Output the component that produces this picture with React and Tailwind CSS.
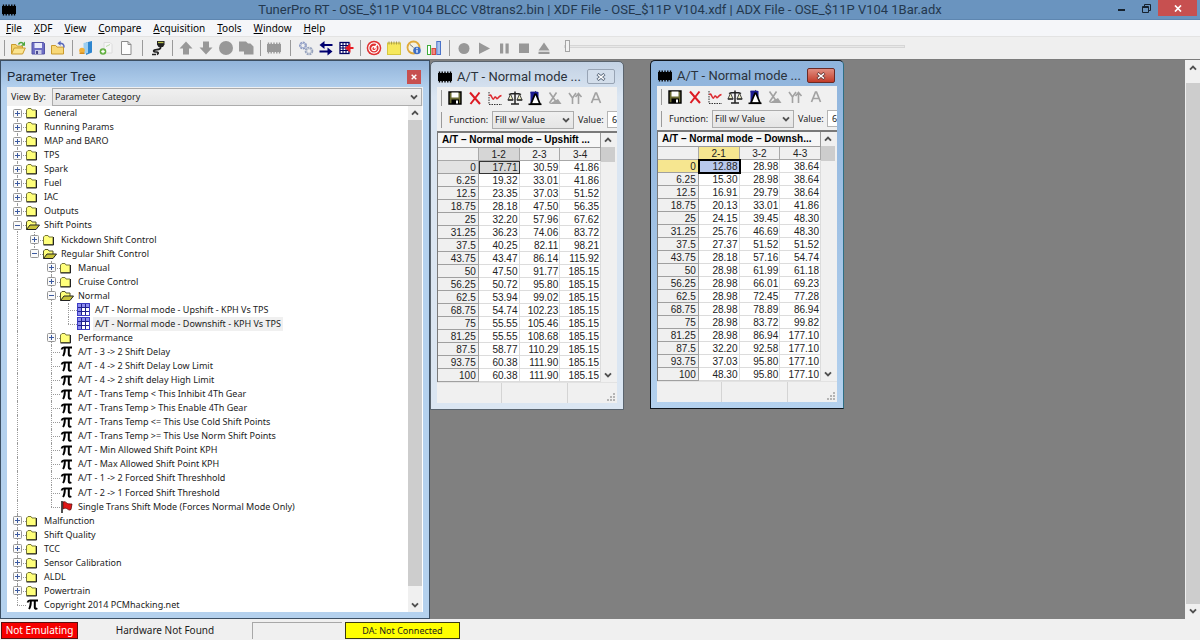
import React, { useState } from "react";

const menus = ["File", "XDF", "View", "Compare", "Acquisition", "Tools", "Window", "Help"];

const pi = (label) => ({ kind: "pi", label });
const folder = (label, children) => ({ kind: children ? "open" : "folder", label, children });

const tree = [
  folder("General"),
  folder("Running Params"),
  folder("MAP and BARO"),
  folder("TPS"),
  folder("Spark"),
  folder("Fuel"),
  folder("IAC"),
  folder("Outputs"),
  folder("Shift Points", [
    folder("Kickdown Shift Control"),
    folder("Regular Shift Control", [
      folder("Manual"),
      folder("Cruise Control"),
      folder("Normal", [
        { kind: "table", label: "A/T - Normal mode - Upshift - KPH Vs TPS" },
        { kind: "table", label: "A/T - Normal mode - Downshift - KPH Vs TPS", selected: true },
      ]),
      folder("Performance"),
      pi("A/T - 3 -> 2 Shift Delay"),
      pi("A/T - 4 -> 2 Shift Delay Low Limit"),
      pi("A/T - 4 -> 2 shift delay High Limit"),
      pi("A/T - Trans Temp < This Inhibit 4Th Gear"),
      pi("A/T - Trans Temp > This Enable 4Th Gear"),
      pi("A/T - Trans Temp <= This Use Cold Shift Points"),
      pi("A/T - Trans Temp >= This Use Norm Shift Points"),
      pi("A/T - Min Allowed Shift Point KPH"),
      pi("A/T - Max Allowed Shift Point KPH"),
      pi("A/T - 1 -> 2 Forced Shift Threshhold"),
      pi("A/T - 2 -> 1 Forced Shift Threshold"),
      { kind: "flag", label: "Single Trans Shift Mode (Forces Normal Mode Only)" },
    ]),
  ]),
  folder("Malfunction"),
  folder("Shift Quality"),
  folder("TCC"),
  folder("Sensor Calibration"),
  folder("ALDL"),
  folder("Powertrain"),
  pi("Copyright 2014 PCMhacking.net"),
];

// Turn the nested tree into rows, each with the guide lines of its ancestors
const flatten = (nodes, guides = []) =>
  nodes.flatMap((node, i) => {
    const last = i === nodes.length - 1;
    const first = i === 0 && guides.length === 0;
    const row = { ...node, guides, last, first };
    return node.children ? [row, ...flatten(node.children, [...guides, !last])] : [row];
  });

const rows = flatten(tree);

const tps = ["0", "6.25", "12.5", "18.75", "25", "31.25", "37.5", "43.75", "50", "56.25", "62.5", "68.75", "75", "81.25", "87.5", "93.75", "100"];

const upshift = [
  ["17.71", "30.59", "41.86"],
  ["19.32", "33.01", "41.86"],
  ["23.35", "37.03", "51.52"],
  ["28.18", "47.50", "56.35"],
  ["32.20", "57.96", "67.62"],
  ["36.23", "74.06", "83.72"],
  ["40.25", "82.11", "98.21"],
  ["43.47", "86.14", "115.92"],
  ["47.50", "91.77", "185.15"],
  ["50.72", "95.80", "185.15"],
  ["53.94", "99.02", "185.15"],
  ["54.74", "102.23", "185.15"],
  ["55.55", "105.46", "185.15"],
  ["55.55", "108.68", "185.15"],
  ["58.77", "110.29", "185.15"],
  ["60.38", "111.90", "185.15"],
  ["60.38", "111.90", "185.15"],
];

const downshift = [
  ["12.88", "28.98", "38.64"],
  ["15.30", "28.98", "38.64"],
  ["16.91", "29.79", "38.64"],
  ["20.13", "33.01", "41.86"],
  ["24.15", "39.45", "48.30"],
  ["25.76", "46.69", "48.30"],
  ["27.37", "51.52", "51.52"],
  ["28.18", "57.16", "54.74"],
  ["28.98", "61.99", "61.18"],
  ["28.98", "66.01", "69.23"],
  ["28.98", "72.45", "77.28"],
  ["28.98", "78.89", "86.94"],
  ["28.98", "83.72", "99.82"],
  ["28.98", "86.94", "177.10"],
  ["32.20", "92.58", "177.10"],
  ["37.03", "95.80", "177.10"],
  ["48.30", "95.80", "177.10"],
];

const Svg = ({ size = 16, children }) => (
  <svg width={size} height={size} viewBox="0 0 16 16" fill="none" aria-hidden="true" className="shrink-0">
    {children}
  </svg>
);

const ChipIcon = ({ color = "#000" }) => (
  <Svg>
    <rect x="1" y="4" width="14" height="8" fill={color} />
    <path d="M2.5 2.5v11M5.2 2.5v11M8 2.5v11M10.8 2.5v11M13.5 2.5v11" stroke={color} strokeWidth="1.4" />
  </Svg>
);

const Chevron = ({ up }) => (
  <svg width="8" height="6" viewBox="0 0 8 6" fill="none" aria-hidden="true">
    <path d={up ? "M1 4.6 4 1.6 7 4.6" : "M1 1.4 4 4.4 7 1.4"} stroke="#505050" strokeWidth="1.9" />
  </svg>
);

/* ---------- main toolbar ---------- */

const icons = {
  open: (
    <Svg>
      <path d="M1.5 14V4.5h4.5l1.2 1.6h5.3V8" fill="#f3d36b" stroke="#c99a2e" />
      <path d="M1.5 14 4.3 8h11L12.6 14z" fill="#fbe48f" stroke="#c99a2e" />
      <path d="M8.5 4.5c1-2.6 3.6-2.6 4.8-.8" stroke="#4ba53c" strokeWidth="1.5" />
      <path d="M15 1.5v4.2h-4z" fill="#4ba53c" />
    </Svg>
  ),
  save: (
    <Svg>
      <path d="M2 2.5h11.5l1 1V14H2z" fill="#6d6dc4" stroke="#5353a5" />
      <rect x="4.5" y="3" width="7.5" height="5" fill="#e9ebfb" />
      <rect x="5" y="10" width="6.5" height="4" fill="#c9cbe6" />
      <rect x="6" y="11" width="2" height="3" fill="#4a4a8f" />
    </Svg>
  ),
  closeFile: (
    <Svg>
      <path d="M1.5 14V5.5h4.2l1.3 1.6h6.5V14z" fill="#f8d877" stroke="#c99a2e" />
      <path d="M14 7.5c.3-3-1.6-4.5-4.5-4.2" stroke="#5868bb" strokeWidth="1.5" />
      <path d="M10.6.8v5L7.4 3.3z" fill="#5868bb" />
    </Svg>
  ),
  door: (
    <Svg>
      <path d="M8 2.5 14 1v11.5L8 15z" fill="#2e86cf" />
      <path d="M5.5 3 10 2v11l-4.5 1z" fill="#9ccff2" />
      <circle cx="4" cy="10.5" r="2.8" fill="#f1b13a" />
      <path d="M1.5 12.5h5v1.5h-5z" fill="#d58a1d" />
    </Svg>
  ),
  addFile: (
    <Svg>
      <path d="M6 2.5h6l2 2V13H6z" fill="#f6f6f6" stroke="#dcdcdc" />
      <path d="M8 6.5l4-2" stroke="#b7d9a8" />
      <circle cx="5" cy="11.5" r="3.3" fill="#5fae3d" />
      <path d="M5 9.7v3.6M3.2 11.5h3.6" stroke="#fff" strokeWidth="1.3" />
    </Svg>
  ),
  newFile: (
    <Svg>
      <path d="M3.5 1.5h6.5l3 3V14.5H3.5z" fill="#fdfdfd" stroke="#8c8c8c" />
      <path d="M10 1.5v3h3" stroke="#8c8c8c" />
    </Svg>
  ),
  plug: (
    <Svg>
      <path d="M7 1h7.5v3.5L13 7H8.5L7 4.5z" fill="#222" />
      <path d="M8 2.5h5.5" stroke="#b9c04a" strokeWidth="1.3" />
      <path d="M10.7 7c0 3-2.2 2.5-5.2 2.8-3 .4-2 2.4.4 2.2 2.6-.2 3.2 1.5 1 2.5" stroke="#222" strokeWidth="1.7" />
      <path d="M2 14.5h4" stroke="#222" strokeWidth="1.5" />
    </Svg>
  ),
  up: <Svg><path d="M8 1.5 14.5 8.5H11v6H5v-6H1.5z" fill="#989898" /></Svg>,
  down: <Svg><path d="M8 14.5 1.5 7.5H5v-6h6v6h3.5z" fill="#989898" /></Svg>,
  circle: <Svg><circle cx="8" cy="8" r="7" fill="#989898" /></Svg>,
  copy: <Svg><path d="M1 1.5h7l2 2h2.5l3 3v8H6v-3H1z" fill="#989898" /></Svg>,
  chip: <ChipIcon color="#989898" />,
  gears: (
    <Svg>
      <circle cx="5" cy="5.5" r="3" stroke="#8e9cc4" strokeWidth="2" strokeDasharray="2 .7" />
      <circle cx="5" cy="5.5" r="2.2" stroke="#a9b4d2" />
      <circle cx="11" cy="11" r="3.3" stroke="#97a3bd" strokeWidth="2" strokeDasharray="2 .7" />
      <circle cx="11" cy="11" r="2.3" stroke="#b7c0d0" />
    </Svg>
  ),
  swap: (
    <Svg>
      <path d="M14.5 5H5M1.5 11.5H11" stroke="#000070" strokeWidth="2.2" />
      <path d="M6.5 1v8L1.5 5zM9.5 7.5v8l5-4z" fill="#000070" />
    </Svg>
  ),
  gridArrow: (
    <Svg>
      <rect x="2" y="2.5" width="9" height="11" fill="#fff" stroke="#000060" strokeWidth="1.3" />
      <path d="M2 5.5h9M2 8h9M2 10.5h9M5 2.5v11M8 2.5v11" stroke="#000060" strokeWidth="1.1" />
      <path d="M15.5 8H9M11.5 5.5 8.5 8l3 2.5z" stroke="#e81c24" strokeWidth="2" fill="#e81c24" />
    </Svg>
  ),
  target: (
    <Svg>
      <circle cx="8" cy="8" r="7.3" fill="#e03030" />
      <circle cx="8" cy="8" r="5.2" fill="#e03030" stroke="#fff" strokeWidth="1.2" />
      <circle cx="8" cy="8.5" r="2.2" stroke="#fff" strokeWidth="1.2" />
      <path d="M8 8.5 11.5 4" stroke="#fff" strokeWidth="1.3" />
    </Svg>
  ),
  note: (
    <Svg>
      <rect x="1.5" y="3" width="13" height="11.5" fill="#f6e85c" stroke="#d6c63e" />
      <path d="M3 1.5v3M5.5 1.5v3M8 1.5v3M10.5 1.5v3M13 1.5v3" stroke="#a99c4a" />
    </Svg>
  ),
  gauge: (
    <Svg>
      <circle cx="7.5" cy="7.5" r="6" fill="#f4f1e2" stroke="#e0a93b" strokeWidth="1.8" />
      <path d="M7.5 7.5 4 4.5" stroke="#777" />
      <circle cx="11" cy="10.5" r="3.8" fill="#3f6fc4" />
      <path d="M11 9.8v3M11 7.7v1.2" stroke="#fff" strokeWidth="1.3" />
    </Svg>
  ),
  bars: (
    <Svg>
      <rect x="1.5" y="5.5" width="3" height="9" fill="#fff" stroke="#3fae3a" />
      <rect x="6" y="8.5" width="3.5" height="6" fill="#f08b80" stroke="#d8493f" />
      <rect x="10.8" y="1.5" width="3.7" height="13" fill="#a8c3f0" stroke="#4a72c8" />
    </Svg>
  ),
  record: <Svg><circle cx="8" cy="8.5" r="5.5" fill="#989898" /></Svg>,
  play: <Svg><path d="M3 2.5 14 8.5 3 14z" fill="#989898" /></Svg>,
  pause: <Svg><path d="M4 3.5h3.2v10H4zM9.5 3.5h3.2v10H9.5z" fill="#989898" /></Svg>,
  stop: <Svg><rect x="3" y="3.5" width="10" height="9.5" fill="#989898" /></Svg>,
  eject: <Svg><path d="M8 2.5 13.5 10.5h-11zM2.5 11.8h11v2.2h-11z" fill="#989898" /></Svg>,
};

const ToolButton = ({ name }) => (
  <button type="button" aria-label={name} className="w-5 h-5 flex shrink-0 items-center justify-center">
    {icons[name]}
  </button>
);

const Divider = ({ className = "w-2" }) => (
  <div className={`${className} flex shrink-0 justify-center`}>
    <div className="w-px h-4 bg-[#9a9a9a]" />
  </div>
);

const Toolbar = () => (
  <div className="h-[23px] shrink-0 flex items-center bg-[#efefef] border-b border-[#7b7b7b]">
    <Divider />
    {["open", "save", "closeFile"].map((n) => <ToolButton key={n} name={n} />)}
    <Divider />
    {["door", "addFile", "newFile"].map((n) => <ToolButton key={n} name={n} />)}
    <Divider className="w-3" />
    <ToolButton name="plug" />
    <Divider />
    {["up", "down", "circle", "copy"].map((n) => <ToolButton key={n} name={n} />)}
    <Divider />
    <ToolButton name="chip" />
    <Divider className="w-3" />
    {["gears", "swap", "gridArrow"].map((n) => <ToolButton key={n} name={n} />)}
    <Divider />
    {["target", "note", "gauge", "bars"].map((n) => <ToolButton key={n} name={n} />)}
    <Divider className="w-2.5" />
    {["record", "play", "pause", "stop", "eject"].map((n) => <ToolButton key={n} name={n} />)}
    <input
      type="range"
      aria-label="Playback position"
      defaultValue="0"
      className="ml-2.5 mb-1 w-[341px] h-3 appearance-none bg-transparent [&::-webkit-slider-runnable-track]:h-[3px] [&::-webkit-slider-runnable-track]:border [&::-webkit-slider-runnable-track]:border-[#d6d6d6] [&::-webkit-slider-runnable-track]:bg-[#e8e8e8] [&::-webkit-slider-thumb]:appearance-none [&::-webkit-slider-thumb]:w-[5px] [&::-webkit-slider-thumb]:h-3 [&::-webkit-slider-thumb]:-mt-[6px] [&::-webkit-slider-thumb]:border [&::-webkit-slider-thumb]:border-[#a5a5a5] [&::-webkit-slider-thumb]:bg-[#f2f2f2]"
    />
  </div>
);

/* ---------- parameter tree ---------- */

const treeIcons = {
  folder: (
    <svg width="14" height="12" viewBox="0 0 14 12" aria-hidden="true">
      <path d="M.5 10.5V3l1.5-1.5h3L6 3h4v7.5z" fill="#ffff7a" stroke="#77773a" />
      <path d="M.5 11h10V3" fill="none" stroke="#222" />
    </svg>
  ),
  open: (
    <svg width="14" height="12" viewBox="0 0 14 12" aria-hidden="true">
      <path d="M.5 10.5V3L2 1.5h3L6 3h4v3" fill="#ffff7a" stroke="#55552a" />
      <path d="M.5 10.5 4 6h9.5L10 10.5z" fill="#c9c43a" stroke="#222" />
    </svg>
  ),
  table: (
    <svg width="13" height="13" viewBox="0 0 13 13" aria-hidden="true">
      <rect x=".5" y=".5" width="12" height="12" fill="#fff" stroke="#3c3cc4" />
      <path d="M1 1h11v3H1zM1 1h3v11H1z" fill="#8c8cf0" />
      <path d="M1 4.5h11M1 8.5h11M4.5 1v11M8.5 1v11" stroke="#20208c" />
    </svg>
  ),
  pi: (
    <svg width="13" height="11" viewBox="0 0 13 11" fill="none" aria-hidden="true">
      <path d="M1.5 3.5C2 1.7 3 1.5 4 1.5h8" stroke="#000" strokeWidth="1.8" />
      <path d="M4.8 2c0 4-.3 6-1.8 8M8.8 2v6.5c0 1.5 1.5 1.5 2.5.8" stroke="#000" strokeWidth="2" />
    </svg>
  ),
  flag: (
    <svg width="13" height="12" viewBox="0 0 13 12" aria-hidden="true">
      <path d="M3 1c2-1 3 .5 4.5 1.5 1 .6 2 .2 4.5.5l-1 5.5c-2 1.5-3-.5-4.5-1-1.5-.6-2.500 0-3.500.5z" fill="#e01818" stroke="#5a0a0a" strokeWidth=".8" />
      <path d="M2 0v12" stroke="#222" strokeWidth="1.6" />
    </svg>
  ),
};

const Expander = ({ open }) => (
  <svg width="9" height="9" viewBox="0 0 9 9" aria-hidden="true" className="relative">
    <rect x=".5" y=".5" width="8" height="8" rx="1" fill="#fafafa" stroke="#969696" />
    <path d={open ? "M2 4.5h5" : "M2 4.5h5M4.5 2v5"} stroke="#3c5aa0" />
  </svg>
);

const TreeRow = ({ row }) => {
  const hasBox = row.kind === "folder" || row.kind === "open";
  return (
    <li className="flex items-stretch min-h-0">
      {row.guides.map((on, i) => (
        <span key={i} className="w-[17px] flex justify-center">
          {on && <span className="border-l border-dotted border-[#9a9a9a]" />}
        </span>
      ))}
      <span className="w-[17px] relative flex items-center justify-center">
        <span
          className={`absolute left-2 border-l border-dotted border-[#9a9a9a] ${row.first ? "top-1/2" : "top-0"} ${row.last ? "bottom-1/2" : "bottom-0"}`}
        />
        <span className="absolute left-2 right-0 top-1/2 border-t border-dotted border-[#9a9a9a]" />
        {hasBox && <Expander open={row.kind === "open"} />}
      </span>
      <button type="button" className="flex items-center">
        <span className="w-4 flex">{treeIcons[row.kind]}</span>
        <span className={`px-0.5 leading-[14px] whitespace-pre ${row.selected ? "bg-[#f0f0f0]" : ""}`}>{row.label}</span>
      </button>
    </li>
  );
};

const ScrollBar = ({ className, children }) => (
  <div className={`flex flex-col shrink-0 bg-[#f0f0f0] ${className}`}>
    <button type="button" aria-label="Scroll up" className="h-[14px] shrink-0 flex items-center justify-center"><Chevron up /></button>
    <div className="flex-1 min-h-0 flex flex-col">{children}</div>
    <button type="button" aria-label="Scroll down" className="h-[14px] shrink-0 flex items-center justify-center"><Chevron /></button>
  </div>
);

const ParameterTree = () => {
  const [category, setCategory] = useState("Parameter Category");
  return (
    <section className="w-[430px] h-full flex flex-col px-1.5 pb-1.5 bg-linear-to-b from-[#92b4da] to-[#b4d1ee] to-5% border border-[#3c4f63] text-[9px] text-[#1c1c1c]">
      <div className="h-[26px] shrink-0 flex items-center justify-between pt-1.5">
        <h2 className="text-[13px] text-[#1d2b3a] font-[Roboto,sans-serif]">Parameter Tree</h2>
        <button type="button" aria-label="Close" className="w-[14px] h-[14px] mr-0.5 flex items-center justify-center bg-[#c75050]">
          <svg width="6" height="6" viewBox="0 0 6 6" aria-hidden="true"><path d="M.7.7l4.6 4.6M5.3.7.7 5.3" stroke="#fff" strokeWidth="1.4" /></svg>
        </button>
      </div>
      <div className="h-[19px] shrink-0 flex items-center bg-[#f0f0f0]">
        <label htmlFor="category" className="w-[45px] pl-1">View By:</label>
        <div className="flex-1 h-[18px] mr-px relative">
          <select
            id="category"
            value={category}
            onChange={(e) => setCategory(e.target.value)}
            className="w-full h-full pl-0.5 appearance-none border border-[#acacac] bg-linear-to-b from-[#f0f0f0] to-[#e5e5e5]"
          >
            <option>Parameter Category</option>
          </select>
          <span className="absolute right-1 top-1.5 pointer-events-none"><Chevron /></span>
        </div>
      </div>
      <div className="flex-1 min-h-0 flex bg-white">
        <ul className="flex-1 pl-0.5 grid auto-rows-fr">
          {rows.map((row) => <TreeRow key={row.label} row={row} />)}
        </ul>
        <ScrollBar className="w-[14px] mr-px">
          <div className="flex-1 bg-[#cdcdcd]" />
          <div className="h-3" />
        </ScrollBar>
      </div>
    </section>
  );
};

/* ---------- table windows ---------- */

const tableTools = {
  Save: (
    <Svg>
      <path d="M2 2h12v12H2z" fill="#6b6b33" stroke="#000" strokeWidth="1.4" />
      <rect x="4.5" y="2.5" width="7" height="5" fill="#fff" />
      <rect x="4.5" y="9.5" width="7.5" height="4.5" fill="#000" />
      <rect x="9" y="10.5" width="2" height="3" fill="#fff" />
    </Svg>
  ),
  Discard: <Svg><path d="M3 2.5 13 14M12.5 2.5 3.5 14" stroke="#dd1a22" strokeWidth="2" /></Svg>,
  Graph: (
    <Svg>
      <path d="M2 2v12.5h13" stroke="#333" strokeDasharray="1.5 1" />
      <path d="M2.5 6c1-2 1.5-1 2.5 1.5s1.5 2 2.5 0 2 2 3 1 1.5-2.5 4-3" stroke="#dd2a30" strokeWidth="1.5" />
    </Svg>
  ),
  Compare: (
    <Svg>
      <path d="M8 1.5v12M4 14h8M2 4.5c2-1.5 10-1.5 12 0" stroke="#222" strokeWidth="1.5" />
      <path d="M3.5 4 1 10h5zM12.5 4 10 10h5z" stroke="#333" fill="#f1f1c8" strokeWidth=".9" />
      <path d="M.8 10h5.5M9.8 10h5.5" stroke="#333" strokeWidth="1.6" />
    </Svg>
  ),
  Delta: (
    <Svg>
      <path d="M3.5 2h8v11h-8z" fill="#1a1a90" />
      <path d="M8.5 3 13 14H4z" fill="#fff" stroke="#000" strokeWidth="1.7" />
      <path d="M1.5 14.3h13" stroke="#000" strokeWidth="1.6" />
      <path d="M3.5 2.5h7" stroke="#1a1a90" strokeWidth="1.8" />
    </Svg>
  ),
  "Scale X": (
    <Svg>
      <path d="M2.5 2.5 10 13M9.5 2.5 2.5 13" stroke="#a2a2a2" strokeWidth="1.6" />
      <path d="M2 14h12.5L11 9z" fill="#a2a2a2" />
    </Svg>
  ),
  "Scale Y": <Svg><path d="M2 3l3.5 5v6M9 3 5.5 8M11.5 14V4M8.5 7l3-3.5 3 3.5" stroke="#a2a2a2" strokeWidth="1.6" /></Svg>,
  Auto: <Svg><path d="M4.5 13 8.500 3h1l4 10M6 9.500h6" stroke="#a2a2a2" strokeWidth="1.7" /></Svg>,
};

const TableWindow = ({ id, title, heading, columns, data, active }) => {
  const frame = active
    ? "border-[#10161d] bg-linear-to-b from-[#8fb4dc] to-[#b4d1ee] border-r-[#2e6f86]"
    : "border-[#5a646e] bg-linear-to-b from-[#c3d2e4] to-[#dbe6f2] to-10%";
  const headHot = active ? "bg-[#f6e690]" : "bg-[#d6d6d6]";
  const rowHot = active ? "bg-[#f6e690]" : "bg-[#e2e2e2]";
  const cellHot = active ? "bg-[#b8c8ec] outline-2 -outline-offset-1 outline-black" : "bg-[#d8d8d8] outline -outline-offset-1 outline-[#333]";

  return (
    <section className={`w-[194px] flex flex-col px-1.5 pb-1.5 border rounded-t-[5px] ${frame}`}>
      <div className="h-[25px] shrink-0 flex items-center pt-1">
        <ChipIcon />
        <h2 className="flex-1 pl-1 whitespace-nowrap text-[13px] text-[#2b333c] font-[Roboto,sans-serif]">{title}</h2>
        <button
          type="button"
          aria-label="Close"
          className={`w-7 h-[15px] mr-0.5 flex shrink-0 items-center justify-center border rounded-[2px] ${active ? "border-[#6b2a25] bg-linear-to-b from-[#e08d80] to-[#c23a28]" : "border-[#98a4b4] bg-[#d3deeb]"}`}
        >
          <svg width="10" height="8" viewBox="0 0 10 8" aria-hidden="true">
            <path d="M1.5 1l7 6M8.5 1l-7 6" stroke={active ? "#6b3a38" : "#5c6a7c"} strokeWidth="3" />
            <path d="M2 1.5l6 5M8 1.5l-6 5" stroke="#fff" strokeWidth="1.6" />
          </svg>
        </button>
      </div>
      <div className="bg-[#f0f0f0] flex flex-col overflow-hidden">
        <div className="h-[22px] flex items-center">
          <Divider />
          {Object.keys(tableTools).map((name) => (
            <button key={name} type="button" aria-label={name} className="w-5 h-5 flex shrink-0 items-center justify-center">
              {tableTools[name]}
            </button>
          ))}
        </div>
        <div className="h-[21px] flex items-center text-[9px] text-[#222]">
          <Divider />
          <label htmlFor={`${id}-fn`} className="w-[47px] pl-1 shrink-0">Function:</label>
          <div className="w-[82px] h-[18px] shrink-0 relative">
            <select id={`${id}-fn`} className="w-full h-full pl-0.5 appearance-none border border-[#acacac] bg-linear-to-b from-[#f0f0f0] to-[#e5e5e5]">
              <option>Fill w/ Value</option>
            </select>
            <span className="absolute right-1 top-1.5 pointer-events-none"><Chevron /></span>
          </div>
          <label htmlFor={`${id}-value`} className="w-[33px] pl-1 shrink-0">Value:</label>
          <input id={`${id}-value`} defaultValue="6" className="w-[60px] h-[17px] shrink-0 pl-1 border border-[#b5b5b5] bg-white" />
        </div>
        <div className="h-[251px] mt-px flex border-t-2 border-l border-[#7a7a7a] overflow-hidden">
          <div className="flex-1 overflow-hidden">
            <table className="w-full table-fixed border-separate border-spacing-0 bg-white text-[10px] leading-[10px] text-[#222] font-['Liberation_Sans',sans-serif]">
              <thead>
                <tr>
                  <th colSpan="4" className="h-[15px] pl-1 text-left whitespace-nowrap overflow-hidden bg-[#f6f6f6] text-black font-bold border-r border-b border-[#9a9a9a]">{heading}</th>
                </tr>
                <tr>
                  <td className="w-[41px] h-[13px] bg-[#f0f0f0] border-r border-b border-[#a8a8a8]" />
                  {columns.map((c, i) => (
                    <th key={c} className={`pt-0.5 font-normal border-r border-b border-[#a8a8a8] ${i === 0 ? headHot : "bg-[#f0f0f0]"}`}>{c}</th>
                  ))}
                </tr>
              </thead>
              <tbody>
                {data.map((values, r) => (
                  <tr key={tps[r]}>
                    <th className={`h-[13px] pt-0.5 pr-0.5 text-right font-normal border-r border-b border-[#a0a0a0] ${r === 0 ? rowHot : "bg-[#f0f0f0]"}`}>{tps[r]}</th>
                    {values.map((v, c) => (
                      <td key={c} className={`pt-px pr-px text-right border-r border-b border-[#dcdcdc] ${r === 0 && c === 0 ? cellHot : ""}`}>{v}</td>
                    ))}
                  </tr>
                ))}
              </tbody>
            </table>
          </div>
          <ScrollBar className="w-[14px] mr-0.5">
            <div className="h-[15px] bg-[#cdcdcd]" />
          </ScrollBar>
        </div>
        <div className="h-[21px] flex border-t border-[#e2e2e2]">
          <div className="w-[65px] border-r border-[#d4d4d4]" />
          <div className="w-[66px] border-r border-[#d4d4d4]" />
          <div className="flex-1 flex items-end justify-end p-0.5">
            <svg width="8" height="8" viewBox="0 0 8 8" fill="#b4b4b4" aria-hidden="true">
              <path d="M6 0h2v2H6zM3 3h2v2H3zM6 3h2v2H6zM0 6h2v2H0zM3 6h2v2H3zM6 6h2v2H6z" />
            </svg>
          </div>
        </div>
      </div>
    </section>
  );
};

/* ---------- app ---------- */

const App = () => {
  return (
    <div className="h-screen flex flex-col overflow-hidden bg-[#f0f0f0] font-['Noto_Sans',sans-serif]">
      <header className="h-5 shrink-0 flex items-center bg-[#6a94bf] border-b border-[#5e86b0]">
        <div className="w-20 pl-px"><ChipIcon /></div>
        <h1 className="flex-1 text-center whitespace-nowrap text-[13px] text-[#24384e] font-[Roboto,sans-serif]">
          TunerPro RT - OSE_$11P V104 BLCC V8trans2.bin | XDF File - OSE_$11P V104.xdf | ADX File - OSE_$11P V104 1Bar.adx
        </h1>
        <div className="w-20 h-full flex justify-end items-start">
          <button type="button" aria-label="Minimize" className="w-6 h-4 flex shrink-0 items-center justify-center">
            <svg width="8" height="10" viewBox="0 0 8 10" aria-hidden="true"><path d="M0 7h7" stroke="#16222e" strokeWidth="2" /></svg>
          </button>
          <button type="button" aria-label="Restore" className="w-6 h-4 flex shrink-0 items-center justify-center">
            <svg width="9" height="9" viewBox="0 0 9 9" fill="none" aria-hidden="true"><path d="M.5 2.5h6v6h-6zM.5 3.5h6M2.5 2V.5h6v6H7" stroke="#16222e" /></svg>
          </button>
          <button type="button" aria-label="Close" className="w-[39px] h-4 mr-[3px] flex shrink-0 items-center justify-center bg-[#c75050]">
            <svg width="8" height="7" viewBox="0 0 8 7" aria-hidden="true"><path d="M1 .5l6 6M7 .5l-6 6" stroke="#fff" strokeWidth="1.7" /></svg>
          </button>
        </div>
      </header>

      <nav className="h-[17px] shrink-0 flex items-center gap-3 pl-1.5 bg-[#f5f6f9] border-b border-[#e3e3e3] text-[10px] text-black">
        {menus.map((m) => (
          <button key={m} type="button"><span className="underline">{m[0]}</span>{m.slice(1)}</button>
        ))}
      </nav>

      <Toolbar />

      <main className="flex-1 min-h-0 flex">
        <div className="flex-1 relative overflow-hidden bg-[#808080]">
          <ParameterTree />
          <div className="absolute left-[430px] top-px">
            <TableWindow
              id="up"
              title="A/T - Normal mode ..."
              heading="A/T – Normal mode – Upshift ..."
              columns={["1-2", "2-3", "3-4"]}
              data={upshift}
            />
          </div>
          <div className="absolute left-[650px] top-0">
            <TableWindow
              id="down"
              title="A/T - Normal mode ..."
              heading="A/T – Normal mode – Downsh..."
              columns={["2-1", "3-2", "4-3"]}
              data={downshift}
              active
            />
          </div>
        </div>
        <ScrollBar className="w-[15px] pl-px py-px">
          <div className="h-2" />
          <div className="flex-1 bg-[#cdcdcd]" />
        </ScrollBar>
      </main>

      <footer className="h-[21px] shrink-0 flex items-center px-px pt-0.5 text-[10px] text-[#1c1c1c]">
        <div className="w-[77px] h-[17px] flex items-center justify-center bg-[#f60000] border border-[#5a1010] text-white">Not Emulating</div>
        <div className="w-[174px] text-center">Hardware Not Found</div>
        <div className="w-[90px] h-[17px] border-t border-l border-[#a8a8a8]" />
        <div className="w-[115px] h-[17px] ml-[3px] flex items-center justify-center bg-[#ffff00] border border-[#3a3a10] text-[9px]">DA: Not Connected</div>
      </footer>
    </div>
  );
};

export default App;
